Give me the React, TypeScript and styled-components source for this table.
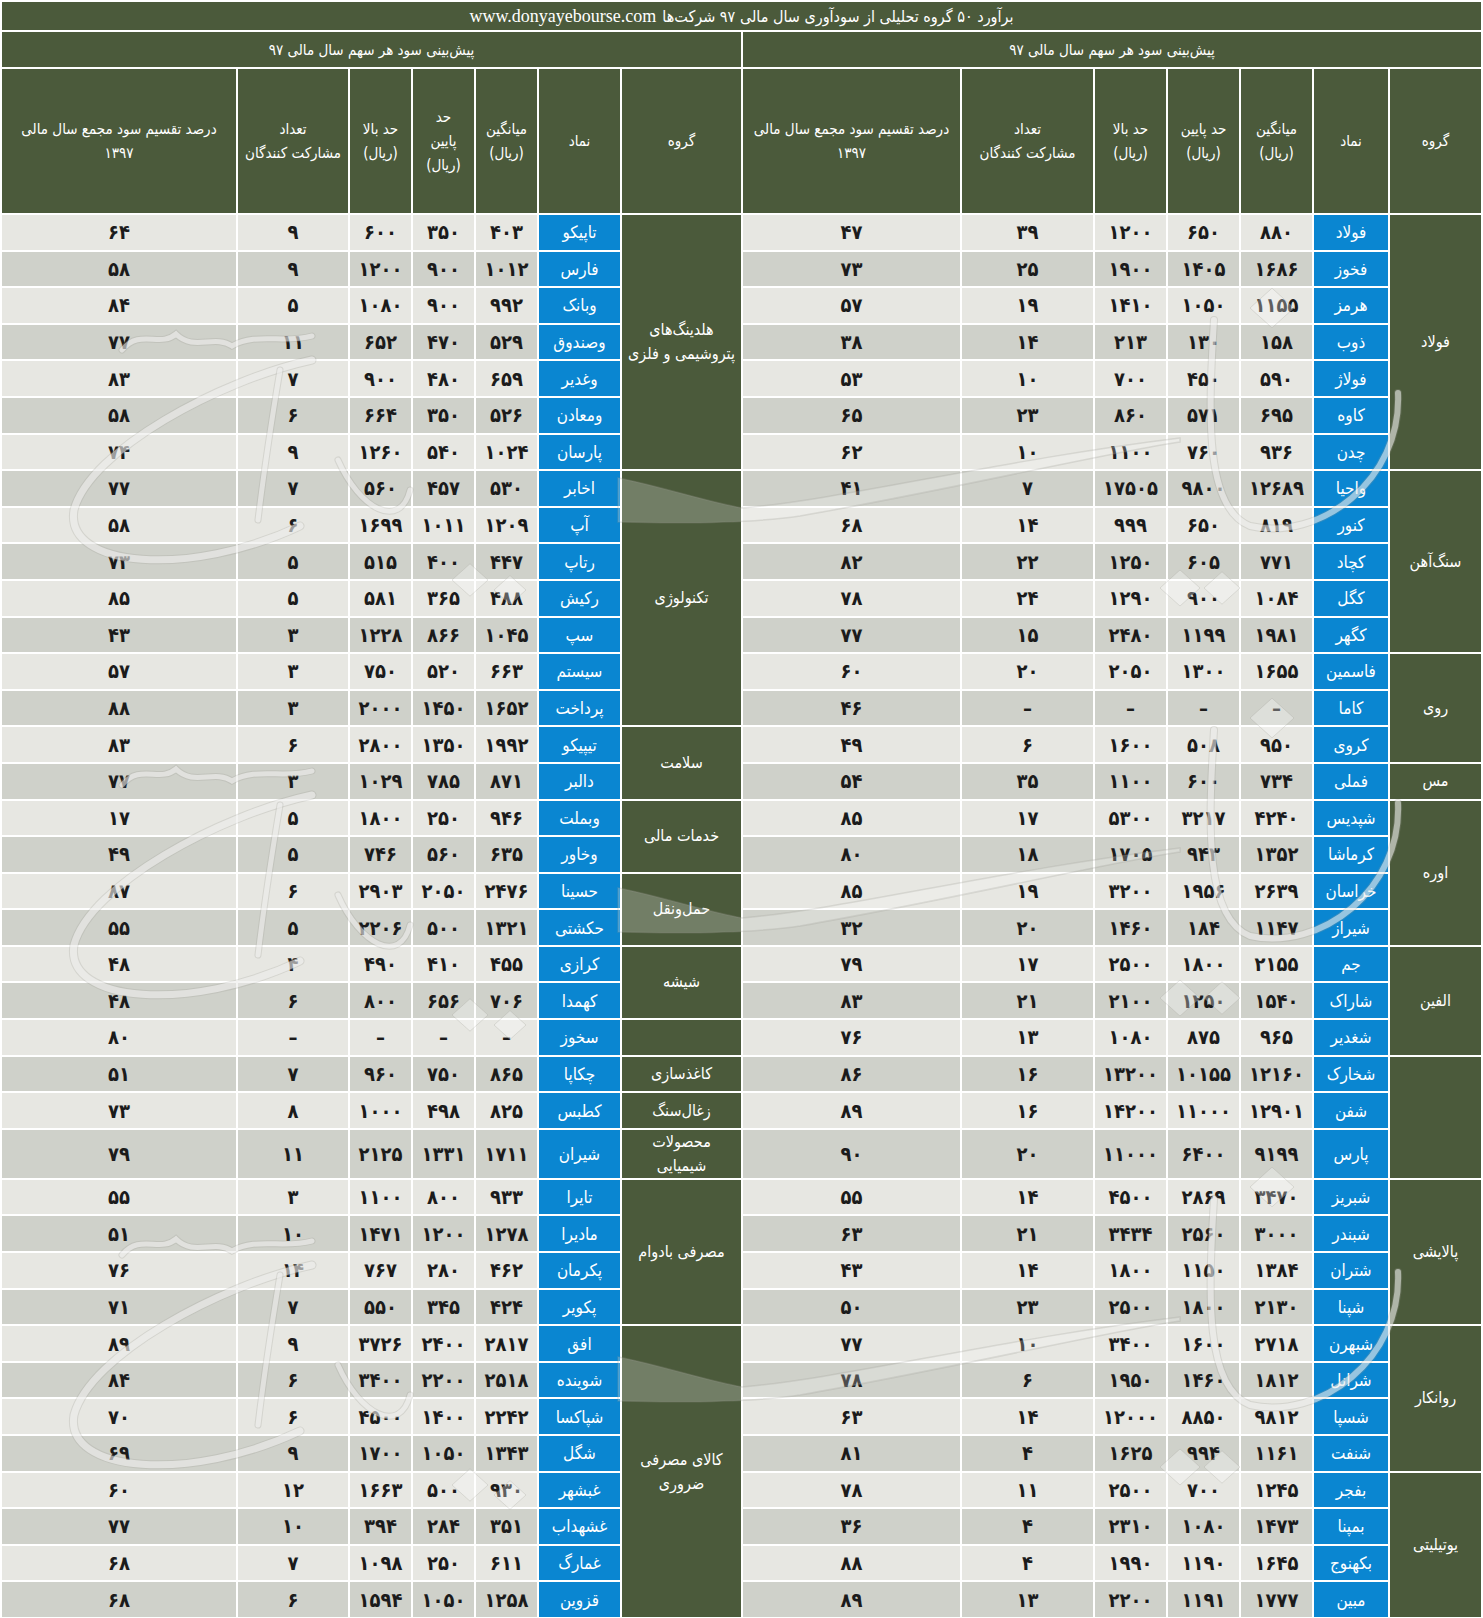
import React from 'react';
import styled, { createGlobalStyle } from 'styled-components';

const GREEN = '#4b5a3b';
const BLUE = '#0a86d1';
const LIGHT = '#e7e7e2';
const DARK = '#cfd1ca';
const FA = '"DejaVu Sans Condensed", "DejaVu Sans", sans-serif';

type Group = { name: string; rows: string[] };

const RIGHT: Group[] = [
  {
    name: 'فولاد',
    rows: [
      'فولاد|۸۸۰|۶۵۰|۱۲۰۰|۳۹|۴۷',
      'فخوز|۱۶۸۶|۱۴۰۵|۱۹۰۰|۲۵|۷۳',
      'هرمز|۱۱۵۵|۱۰۵۰|۱۴۱۰|۱۹|۵۷',
      'ذوب|۱۵۸|۱۳۰|۲۱۳|۱۴|۳۸',
      'فولاژ|۵۹۰|۴۵۰|۷۰۰|۱۰|۵۳',
      'کاوه|۶۹۵|۵۷۱|۸۶۰|۲۳|۶۵',
      'چدن|۹۳۶|۷۶۰|۱۱۰۰|۱۰|۶۲',
    ],
  },
  {
    name: 'سنگ‌آهن',
    rows: [
      'واحیا|۱۲۶۸۹|۹۸۰۰|۱۷۵۰۵|۷|۴۱',
      'کنور|۸۱۹|۶۵۰|۹۹۹|۱۴|۶۸',
      'کچاد|۷۷۱|۶۰۵|۱۲۵۰|۲۲|۸۲',
      'کگل|۱۰۸۴|۹۰۰|۱۲۹۰|۲۴|۷۸',
      'کگهر|۱۹۸۱|۱۱۹۹|۲۴۸۰|۱۵|۷۷',
    ],
  },
  {
    name: 'روی',
    rows: [
      'فاسمین|۱۶۵۵|۱۳۰۰|۲۰۵۰|۲۰|۶۰',
      'کاما|–|–|–|–|۴۶',
      'کروی|۹۵۰|۵۰۸|۱۶۰۰|۶|۴۹',
    ],
  },
  { name: 'مس', rows: ['فملی|۷۳۴|۶۰۰|۱۱۰۰|۳۵|۵۴'] },
  {
    name: 'اوره',
    rows: [
      'شپدیس|۴۲۴۰|۳۲۱۷|۵۳۰۰|۱۷|۸۵',
      'کرماشا|۱۳۵۲|۹۴۳|۱۷۰۵|۱۸|۸۰',
      'خراسان|۲۶۳۹|۱۹۵۶|۳۲۰۰|۱۹|۸۵',
      'شیراز|۱۱۴۷|۱۸۴|۱۴۶۰|۲۰|۳۲',
    ],
  },
  {
    name: 'الفین',
    rows: [
      'جم|۲۱۵۵|۱۸۰۰|۲۵۰۰|۱۷|۷۹',
      'شاراک|۱۵۴۰|۱۲۵۰|۲۱۰۰|۲۱|۸۳',
      'شغدیر|۹۶۵|۸۷۵|۱۰۸۰|۱۳|۷۶',
    ],
  },
  {
    name: '',
    rows: [
      'شخارک|۱۲۱۶۰|۱۰۱۵۵|۱۳۲۰۰|۱۶|۸۶',
      'شفن|۱۲۹۰۱|۱۱۰۰۰|۱۴۲۰۰|۱۶|۸۹',
      'پارس|۹۱۹۹|۶۴۰۰|۱۱۰۰۰|۲۰|۹۰',
    ],
  },
  {
    name: 'پالایشی',
    rows: [
      'شبریز|۳۴۷۰|۲۸۶۹|۴۵۰۰|۱۴|۵۵',
      'شبندر|۳۰۰۰|۲۵۶۰|۳۴۳۴|۲۱|۶۳',
      'شتران|۱۳۸۴|۱۱۵۰|۱۸۰۰|۱۴|۴۳',
      'شپنا|۲۱۳۰|۱۸۰۰|۲۵۰۰|۲۳|۵۰',
    ],
  },
  {
    name: 'روانکار',
    rows: [
      'شبهرن|۲۷۱۸|۱۶۰۰|۳۴۰۰|۱۰|۷۷',
      'شرانل|۱۸۱۲|۱۴۶۰|۱۹۵۰|۶|۷۸',
      'شسپا|۹۸۱۲|۸۸۵۰|۱۲۰۰۰|۱۴|۶۳',
      'شنفت|۱۱۶۱|۹۹۴|۱۶۲۵|۴|۸۱',
    ],
  },
  {
    name: 'یوتیلیتی',
    rows: [
      'بفجر|۱۲۴۵|۷۰۰|۲۵۰۰|۱۱|۷۸',
      'بمپنا|۱۴۷۳|۱۰۸۰|۲۳۱۰|۴|۳۶',
      'بکهنوج|۱۶۴۵|۱۱۹۰|۱۹۹۰|۴|۸۸',
      'مبین|۱۷۷۷|۱۱۹۱|۲۲۰۰|۱۳|۸۹',
    ],
  },
];

const LEFT: Group[] = [
  {
    name: 'هلدینگ‌های\nپتروشیمی و فلزی',
    rows: [
      'تاپیکو|۴۰۳|۳۵۰|۶۰۰|۹|۶۴',
      'فارس|۱۰۱۲|۹۰۰|۱۲۰۰|۹|۵۸',
      'وبانک|۹۹۲|۹۰۰|۱۰۸۰|۵|۸۴',
      'وصندوق|۵۲۹|۴۷۰|۶۵۲|۱۱|۷۷',
      'وغدیر|۶۵۹|۴۸۰|۹۰۰|۷|۸۳',
      'ومعادن|۵۲۶|۳۵۰|۶۶۴|۶|۵۸',
      'پارسان|۱۰۲۴|۵۴۰|۱۲۶۰|۹|۷۴',
    ],
  },
  {
    name: 'تکنولوژی',
    rows: [
      'اخابر|۵۳۰|۴۵۷|۵۶۰|۷|۷۷',
      'آپ|۱۲۰۹|۱۰۱۱|۱۶۹۹|۶|۵۸',
      'رتاپ|۴۴۷|۴۰۰|۵۱۵|۵|۷۳',
      'رکیش|۴۸۸|۳۶۵|۵۸۱|۵|۸۵',
      'سپ|۱۰۴۵|۸۶۶|۱۲۲۸|۳|۴۳',
      'سیستم|۶۶۳|۵۲۰|۷۵۰|۳|۵۷',
      'پرداخت|۱۶۵۲|۱۴۵۰|۲۰۰۰|۳|۸۸',
    ],
  },
  {
    name: 'سلامت',
    rows: ['تیپیکو|۱۹۹۲|۱۳۵۰|۲۸۰۰|۶|۸۳', 'دالبر|۸۷۱|۷۸۵|۱۰۲۹|۳|۷۷'],
  },
  {
    name: 'خدمات مالی',
    rows: ['وبملت|۹۴۶|۲۵۰|۱۸۰۰|۵|۱۷', 'وخاور|۶۳۵|۵۶۰|۷۴۶|۵|۴۹'],
  },
  {
    name: 'حمل‌ونقل',
    rows: ['حسینا|۲۴۷۶|۲۰۵۰|۲۹۰۳|۶|۸۷', 'حکشتی|۱۳۲۱|۵۰۰|۲۲۰۶|۵|۵۵'],
  },
  {
    name: 'شیشه',
    rows: ['کرازی|۴۵۵|۴۱۰|۴۹۰|۴|۴۸', 'کهمدا|۷۰۶|۶۵۶|۸۰۰|۶|۴۸'],
  },
  { name: '', rows: ['سخوز|–|–|–|–|۸۰'] },
  { name: 'کاغذسازی', rows: ['چکاپا|۸۶۵|۷۵۰|۹۶۰|۷|۵۱'] },
  { name: 'زغال‌سنگ', rows: ['کطبس|۸۲۵|۴۹۸|۱۰۰۰|۸|۷۳'] },
  { name: 'محصولات\nشیمیایی', rows: ['شیران|۱۷۱۱|۱۳۳۱|۲۱۲۵|۱۱|۷۹'] },
  {
    name: 'مصرفی بادوام',
    rows: [
      'تایرا|۹۳۳|۸۰۰|۱۱۰۰|۳|۵۵',
      'مادیرا|۱۲۷۸|۱۲۰۰|۱۴۷۱|۱۰|۵۱',
      'پکرمان|۴۶۲|۲۸۰|۷۶۷|۱۴|۷۶',
      'پکویر|۴۲۴|۳۴۵|۵۵۰|۷|۷۱',
    ],
  },
  {
    name: 'کالای مصرفی\nضروری',
    rows: [
      'افق|۲۸۱۷|۲۴۰۰|۳۷۲۶|۹|۸۹',
      'شوینده|۲۵۱۸|۲۲۰۰|۳۴۰۰|۶|۸۴',
      'شپاکسا|۲۲۴۲|۱۴۰۰|۴۵۰۰|۶|۷۰',
      'شگل|۱۳۴۳|۱۰۵۰|۱۷۰۰|۹|۶۹',
      'غبشهر|۹۳۰|۵۰۰|۱۶۶۳|۱۲|۶۰',
      'غشهداب|۳۵۱|۲۸۴|۳۹۴|۱۰|۷۷',
      'غمارگ|۶۱۱|۲۵۰|۱۰۹۸|۷|۶۸',
      'قزوین|۱۲۵۸|۱۰۵۰|۱۵۹۴|۶|۶۸',
    ],
  },
];

// column widths, right to left
const COLS = [91, 74, 71, 71, 71, 131, 217, 119, 81, 61, 61, 61, 110, 234];
const TALL_ROW = 25;

const GlobalStyle = createGlobalStyle`
  html, body {
    margin: 0;
    padding: 0;
    background: #ffffff;
  }
  body {
    font-family: ${FA};
  }
`;

const Sheet = styled.div`
  position: relative;
  width: 1483px;
  height: 1618px;
  overflow: hidden;
  background: #ffffff;
`;

const Table = styled.table`
  width: 1483px;
  direction: rtl;
  table-layout: fixed;
  border-collapse: separate;
  border-spacing: 2px;
  font-family: ${FA};
`;

const TitleCell = styled.th`
  height: 28px;
  padding: 0;
  background: ${GREEN};
  color: #ffffff;
  font-weight: normal;
  font-size: 16px;
  text-align: center;
  vertical-align: middle;
  white-space: nowrap;
`;

const Url = styled.span`
  font-family: 'Liberation Serif', serif;
  font-size: 18px;
  margin-right: 6px;
`;

const HalfHead = styled.th`
  height: 35px;
  padding: 0;
  background: ${GREEN};
  color: #ffffff;
  font-weight: normal;
  font-size: 15px;
  text-align: center;
  vertical-align: middle;
`;

const ColHead = styled.th`
  height: 144px;
  padding: 0 2px;
  background: ${GREEN};
  color: #ffffff;
  font-weight: normal;
  font-size: 15px;
  line-height: 24px;
  text-align: center;
  vertical-align: middle;
  white-space: nowrap;
`;

const BodyRow = styled.tr<{ $tall: boolean }>`
  height: ${({ $tall }) => ($tall ? 48 : 34.6)}px;
`;

const GroupCell = styled.td`
  padding: 0 3px;
  background: ${GREEN};
  color: #ffffff;
  font-size: 16px;
  line-height: 24px;
  text-align: center;
  vertical-align: middle;
  white-space: pre-line;
`;

const SymbolCell = styled.td`
  padding: 0;
  background: ${BLUE};
  color: #ffffff;
  font-size: 17px;
  line-height: 20px;
  text-align: center;
  vertical-align: middle;
  white-space: nowrap;
`;

const NumCell = styled.td<{ $alt: boolean }>`
  padding: 0;
  background: ${({ $alt }) => ($alt ? DARK : LIGHT)};
  color: #1b1b1b;
  font-weight: bold;
  font-size: 20px;
  line-height: 20px;
  text-align: center;
  vertical-align: middle;
  white-space: nowrap;
`;

const Overlay = styled.svg`
  position: absolute;
  top: 0;
  left: 0;
  pointer-events: none;
`;

type Slot = { group?: Group; span: number; cells: string[] };

// lays the groups out row by row, so each group cell knows where it starts
const layout = (groups: Group[]): Slot[] => {
  const slots: Slot[] = [];
  groups.forEach(g => {
    g.rows.forEach((r, i) => {
      slots.push({ group: i === 0 ? g : undefined, span: g.rows.length, cells: r.split('|') });
    });
  });
  return slots;
};

const rightSlots = layout(RIGHT);
const leftSlots = layout(LEFT);

const HalfCells: React.FC<{ slot: Slot; alt: boolean }> = ({ slot, alt }) => {
  const [sym, ...nums] = slot.cells;
  return (
    <>
      {slot.group && <GroupCell rowSpan={slot.span}>{slot.group.name}</GroupCell>}
      <SymbolCell>{sym}</SymbolCell>
      {nums.map((n, i) => (
        <NumCell key={i} $alt={alt}>
          {n}
        </NumCell>
      ))}
    </>
  );
};

const HeadCells: React.FC<{ narrow?: boolean }> = ({ narrow }) => (
  <>
    <ColHead>گروه</ColHead>
    <ColHead>نماد</ColHead>
    <ColHead>
      میانگین
      <br />
      (ریال)
    </ColHead>
    {narrow ? (
      <ColHead>
        حد
        <br />
        پایین
        <br />
        (ریال)
      </ColHead>
    ) : (
      <ColHead>
        حد پایین
        <br />
        (ریال)
      </ColHead>
    )}
    <ColHead>
      حد بالا
      <br />
      (ریال)
    </ColHead>
    <ColHead>
      تعداد
      <br />
      مشارکت کنندگان
    </ColHead>
    <ColHead>
      درصد تقسیم سود مجمع سال مالی
      <br />
      ۱۳۹۷
    </ColHead>
  </>
);

const Brush: React.FC<{ d: string; w?: number }> = ({ d, w = 7 }) => (
  <>
    <path d={d} fill="none" stroke="#9a9c94" strokeOpacity={0.25} strokeWidth={w + 2} strokeLinecap="round" />
    <path d={d} fill="none" stroke="#ffffff" strokeOpacity={0.5} strokeWidth={w} strokeLinecap="round" />
  </>
);

const Dot: React.FC<{ x: number; y: number; s?: number }> = ({ x, y, s = 24 }) => (
  <path
    d={`M${x - s} ${y} L${x} ${y - s * 0.9} L${x + s} ${y} L${x} ${y + s * 0.9} Z`}
    fill="#ffffff"
    fillOpacity={0.3}
    stroke="#9a9c94"
    strokeOpacity={0.25}
  />
);

// faint site logo printed over the sheet: right part
const RightMark: React.FC<{ y: number }> = ({ y }) => (
  <g transform={`translate(0 ${y})`}>
    <path
      d="M1180 0 C1000 22 840 62 742 70 C700 62 660 48 618 40 L618 84 C700 86 760 84 800 78 C950 52 1100 16 1180 4 Z"
      fill="#ffffff"
      fillOpacity={0.22}
      stroke="#9a9c94"
      strokeOpacity={0.25}
      strokeWidth={1.5}
    />
    <Brush d="M1214 -118 C1208 -20 1205 70 1250 88 C1320 104 1402 42 1398 -45" w={6} />
    <Dot x={1272} y={-130} s={22} />
    <Dot x={1180} y={150} s={20} />
    <Dot x={1222} y={150} s={18} />
  </g>
);

// faint site logo: left part, a tailed bowl under a row of teeth
const LeftMark: React.FC<{ y: number }> = ({ y }) => (
  <g transform={`translate(0 ${y})`}>
    <Brush d="M122 10 C140 -12 160 8 176 -6 C194 12 214 -6 232 6 C256 -8 284 4 312 -4" w={5} />
    <Brush d="M312 20 C220 40 90 110 74 170 C64 228 190 238 300 186" w={7} />
    <Brush d="M280 30 C270 90 264 130 258 180" w={5} />
    <Brush d="M338 120 C360 170 400 190 410 150" w={5} />
    <Dot x={470} y={240} s={18} />
    <Dot x={510} y={250} s={16} />
  </g>
);

const Watermark: React.FC = () => (
  <Overlay width={1483} height={1618} viewBox="0 0 1483 1618">
    <RightMark y={438} />
    <RightMark y={848} />
    <RightMark y={1317} />
    <LeftMark y={340} />
    <LeftMark y={775} />
    <LeftMark y={1245} />
  </Overlay>
);

const App: React.FC = () => (
  <>
    <GlobalStyle />
    <Sheet>
      <Table>
        <colgroup>
          {COLS.map((w, i) => (
            <col key={i} style={{ width: w }} />
          ))}
        </colgroup>
        <thead>
          <tr>
            <TitleCell colSpan={14}>
              برآورد ۵۰ گروه تحلیلی از سودآوری سال مالی ۹۷ شرکت‌ها
              <Url>www.donyayebourse.com</Url>
            </TitleCell>
          </tr>
          <tr>
            <HalfHead colSpan={7}>پیش‌بینی سود هر سهم سال مالی ۹۷</HalfHead>
            <HalfHead colSpan={7}>پیش‌بینی سود هر سهم سال مالی ۹۷</HalfHead>
          </tr>
          <tr>
            <HeadCells />
            <HeadCells narrow />
          </tr>
        </thead>
        <tbody>
          {rightSlots.map((slot, i) => (
            <BodyRow key={i} $tall={i === TALL_ROW}>
              <HalfCells slot={slot} alt={i % 2 === 1} />
              <HalfCells slot={leftSlots[i]} alt={i % 2 === 1} />
            </BodyRow>
          ))}
        </tbody>
      </Table>
      <Watermark />
    </Sheet>
  </>
);

export default App;
